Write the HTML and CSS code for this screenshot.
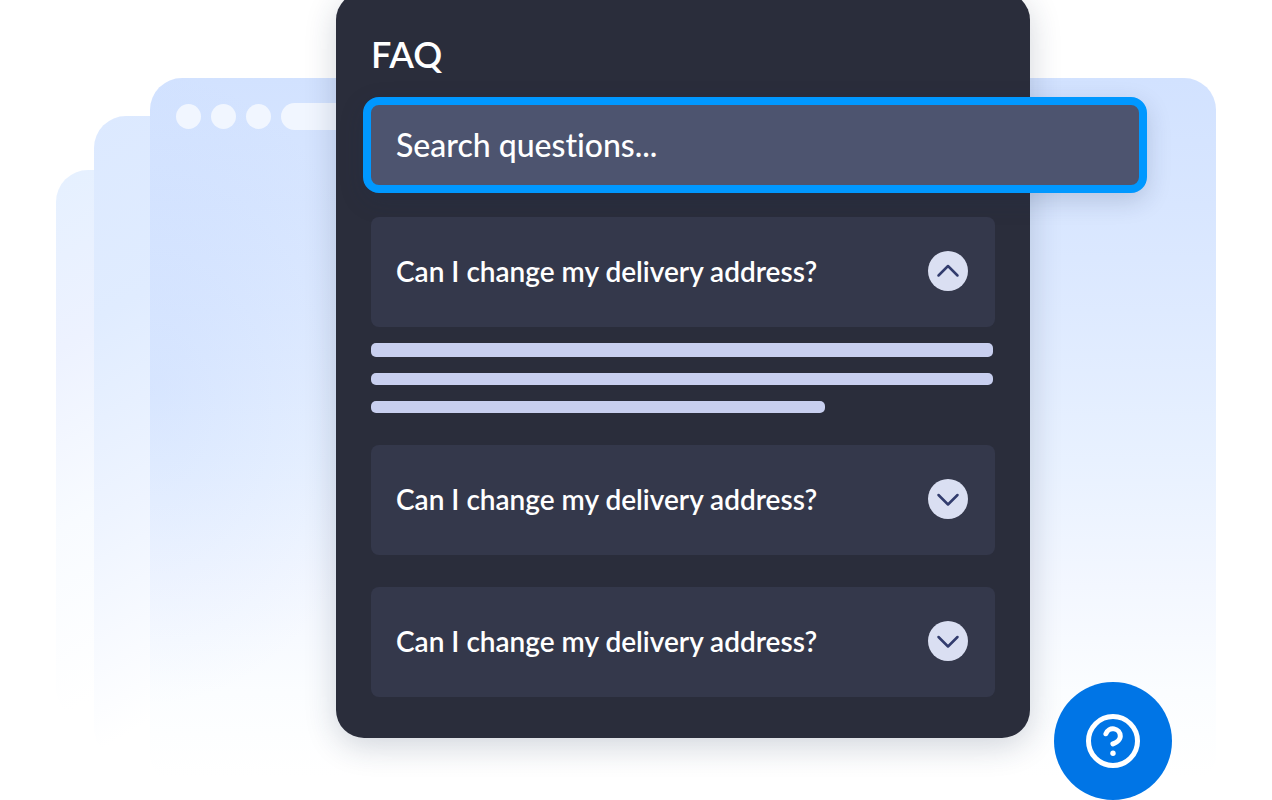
FILE: index.html
```html
<!DOCTYPE html>
<html lang="en">
<head>
<meta charset="utf-8">
<meta name="viewport" content="width=device-width, initial-scale=1">
<title>FAQ</title>
<link rel="stylesheet" href="styles.css">
</head>
<body>
<main class="scene">
  <div class="window window-back" aria-hidden="true"></div>
  <div class="window window-middle" aria-hidden="true"></div>
  <div class="window window-front" aria-hidden="true">
    <span class="dot"></span>
    <span class="dot"></span>
    <span class="dot"></span>
    <span class="address"></span>
  </div>

  <section class="panel" aria-labelledby="faq-title">
    <h1 class="title" id="faq-title">FAQ</h1>
    <div class="search">
      <input class="search-input" type="search" aria-label="Search questions" placeholder="Search questions...">
    </div>
    <div class="questions">
      <div class="entry">
        <div class="card">
          <h2 class="question" id="q1">Can I change my delivery address?</h2>
          <button class="toggle" type="button" aria-expanded="true" aria-labelledby="q1">
            <svg class="chevron" viewBox="0 0 24 24" aria-hidden="true"><path d="M2.500 16.500 12 7l9.500 9.500"/></svg>
          </button>
        </div>
        <div class="answer">
          <span class="line line-first"></span>
          <span class="line"></span>
          <span class="line line-short"></span>
        </div>
      </div>
      <div class="card">
        <h2 class="question" id="q2">Can I change my delivery address?</h2>
        <button class="toggle" type="button" aria-expanded="false" aria-labelledby="q2">
          <svg class="chevron" viewBox="0 0 24 24" aria-hidden="true"><path d="M2.500 8 12 17.500 21.500 8"/></svg>
        </button>
      </div>
      <div class="card">
        <h2 class="question" id="q3">Can I change my delivery address?</h2>
        <button class="toggle" type="button" aria-expanded="false" aria-labelledby="q3">
          <svg class="chevron" viewBox="0 0 24 24" aria-hidden="true"><path d="M2.500 8 12 17.500 21.500 8"/></svg>
        </button>
      </div>
    </div>
  </section>

  <button class="help" type="button" aria-label="Help">
    <svg class="help-icon" viewBox="0 0 54 54" aria-hidden="true">
      <circle cx="27" cy="27" r="24.500"/>
      <path d="M19.900 19.800a7.400 7.400 0 0 1 14.400 2.400c0 5-7.400 7.700-7.400 7.700"/>
      <circle class="help-dot" cx="27" cy="39.300" r="2.700"/>
    </svg>
  </button>
</main>
</body>
</html>
```

FILE: styles.css
```css
* {
  box-sizing: border-box;
}

body {
  margin: 0;
  background: #fff;
  color: #fff;
  font-family: Lato, "Open Sans", sans-serif;
  font-variant-ligatures: none;
}

.scene {
  position: relative;
  min-height: 100vh;
  padding: 0 242px 62px 336px;
  overflow: hidden;
}

.window {
  position: absolute;
  border-radius: 32px;
}

.window-back {
  top: 170px;
  bottom: 80px;
  left: 56px;
  width: 300px;
  background: linear-gradient(150deg, #e5f0ff, #edf2ff 25%, #f8fbff 50%, #fff 76%);
}

.window-middle {
  top: 116px;
  bottom: 40px;
  left: 94px;
  width: 300px;
  background: linear-gradient(150deg, #dce9ff, #e0ecff 25%, #eef4ff 50%, #fff 78%);
}

.window-front {
  top: 78px;
  right: 56px;
  bottom: 16px;
  left: 150px;
  display: flex;
  align-items: flex-start;
  gap: 10px;
  padding: 25px 26px;
  background:
    radial-gradient(ellipse 240px 45% at 0 44%, rgba(150, 185, 255, 0.16), rgba(150, 185, 255, 0)),
    linear-gradient(180deg, #d2e2ff, #d8e6ff 18%, #deeaff 33%, #e8f1ff 54%, #f3f7ff 72%, #fbfdff 87%, #fff 99%);
}

.dot {
  width: 25px;
  height: 25px;
  margin-top: 1px;
  border-radius: 50%;
  background: #f1f6ff;
}

.address {
  width: 300px;
  height: 27px;
  border-radius: 14px;
  background: #f1f6ff;
}

.panel {
  position: relative;
  margin-top: -8px;
  padding: 38px 35px 41px;
  border-radius: 28px;
  background: #2a2d3b;
  box-shadow: 0 8px 32px rgba(30, 45, 75, 0.2);
}

.title {
  margin: 0 0 19px;
  font-size: 36px;
  font-weight: 600;
  line-height: 48px;
}

.search {
  margin: 0 -152px 24px -8px;
}

.search-input {
  display: block;
  width: 100%;
  height: 96px;
  padding: 0 25px 2px;
  border: 8px solid #0098ff;
  border-radius: 16px;
  outline: none;
  background: #4d546f;
  box-shadow: 0 8px 24px rgba(30, 45, 75, 0.18);
  color: #fff;
  font: 500 32px/40px Lato, "Open Sans", sans-serif;
  font-variant-ligatures: none;
  appearance: none;
}

.search-input::placeholder {
  color: #fff;
  opacity: 1;
}

.questions {
  display: flex;
  flex-direction: column;
  gap: 32px;
}

.card {
  display: flex;
  align-items: center;
  justify-content: space-between;
  min-height: 110px;
  padding: 0 27px 2px 25px;
  border-radius: 8px;
  background: #34384b;
}

.question {
  margin: 0;
  font-size: 28px;
  font-weight: 600;
  line-height: 36px;
}

.toggle {
  display: grid;
  flex: none;
  place-items: center;
  width: 40px;
  height: 40px;
  padding: 0;
  border: 0;
  border-radius: 50%;
  background: #dadff2;
  cursor: pointer;
}

.chevron {
  width: 24px;
  height: 24px;
  fill: none;
  stroke: #323c6e;
  stroke-width: 2.5;
  stroke-linecap: round;
  stroke-linejoin: round;
}

.answer {
  display: flex;
  flex-direction: column;
  gap: 16px;
  padding: 16px 2px 0 0;
}

.line {
  height: 12px;
  border-radius: 5px;
  background: #c8cfef;
}

.line-first {
  height: 14px;
}

.line-short {
  width: 73%;
}

.help {
  position: absolute;
  right: 100px;
  bottom: 0;
  display: grid;
  place-items: center;
  width: 118px;
  height: 118px;
  padding: 0;
  border: 0;
  border-radius: 50%;
  background: #0075e6;
  cursor: pointer;
}

.help-icon {
  width: 54px;
  height: 54px;
  fill: none;
  stroke: #fff;
  stroke-width: 5;
  stroke-linecap: round;
}

.help-icon .help-dot {
  fill: #fff;
  stroke: none;
}
```
